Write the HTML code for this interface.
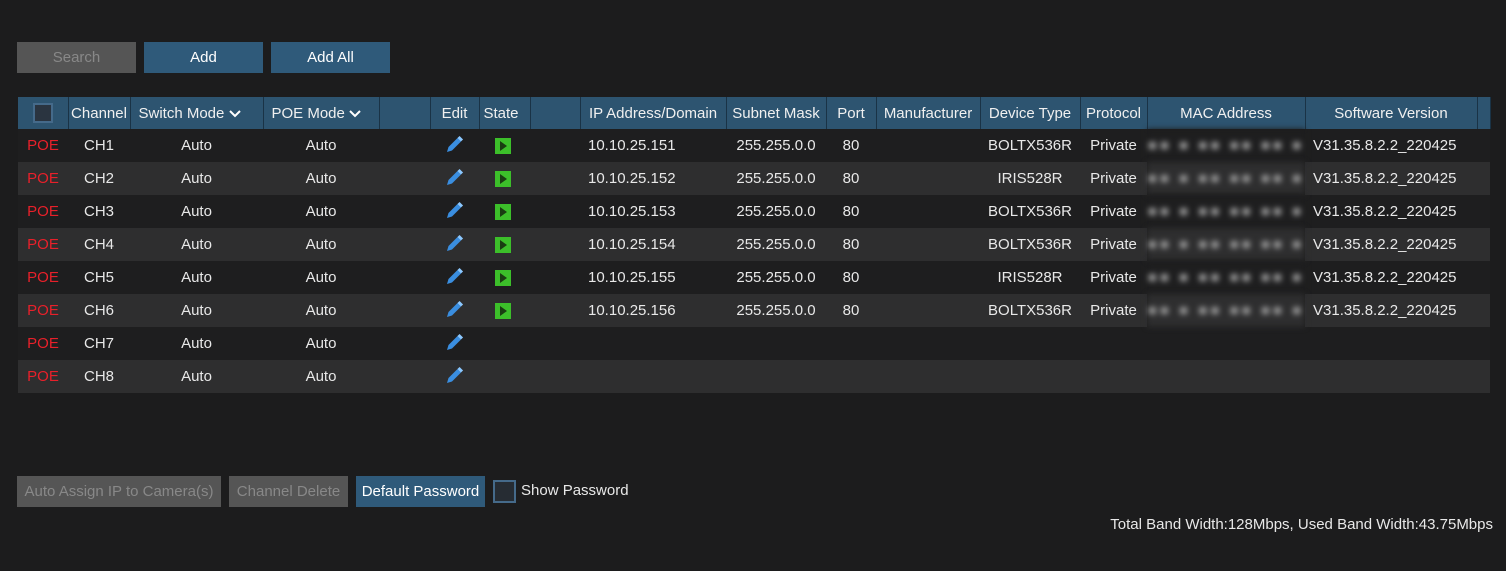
<!DOCTYPE html>
<html><head><meta charset="utf-8"><style>
*{margin:0;padding:0;box-sizing:border-box}
body{width:1506px;height:571px;background:#1c1c1d;font-family:"Liberation Sans",sans-serif;font-size:15px;color:#e8e8e8;position:relative;overflow:hidden}
.btn{position:absolute;height:31px;line-height:31px;text-align:center;font-size:15px;white-space:nowrap;overflow:hidden}
.blue{background:#2f5a7a;color:#fff}
.grey{background:#555;color:#888}
table{position:absolute;left:18px;top:97px;border-collapse:collapse;table-layout:fixed;width:1472px}
td,th{height:33px;padding:0;text-align:center;white-space:nowrap;font-weight:normal;overflow:hidden}
th{background:#2d5470;border-right:1px solid #1a3346;height:32px;color:#f0f0f0;font-size:15px}
tr.a td{background:#1e1e1f}
tr.b td{background:#2e2e2f}
.poe{color:#e8202a}
.l{text-align:left;padding-left:8px}
.mac{filter:blur(3px);color:#999;letter-spacing:3px}
.cb{display:inline-block;width:20px;height:20px;background:#2a3440;border:2px solid #456a8a;vertical-align:middle}
.play{display:inline-block;width:16px;height:16px;background:#3cbf2a;position:relative;vertical-align:middle}
.play:after{content:"";position:absolute;left:5px;top:3px;border-left:7px solid #1a3d12;border-top:5px solid transparent;border-bottom:5px solid transparent}
</style></head><body>
<div class="btn grey" style="left:17px;top:42px;width:119px">Search</div>
<div class="btn blue" style="left:144px;top:42px;width:119px">Add</div>
<div class="btn blue" style="left:271px;top:42px;width:119px">Add All</div>
<table>
<colgroup><col style="width:50px"><col style="width:62px"><col style="width:133px"><col style="width:116px"><col style="width:51px"><col style="width:49px"><col style="width:51px"><col style="width:50px"><col style="width:146px"><col style="width:100px"><col style="width:50px"><col style="width:104px"><col style="width:100px"><col style="width:67px"><col style="width:158px"><col style="width:172px"><col style="width:13px"></colgroup>
<tr><th><span class="cb"></span></th><th>Channel</th><th style="text-align:left;padding-left:8px">Switch Mode <svg width="12" height="8" viewBox="0 0 12 8"><path d="M1 1l5 5 5-5" stroke="#fff" stroke-width="2" fill="none"/></svg></th><th style="text-align:left;padding-left:8px">POE Mode <svg width="12" height="8" viewBox="0 0 12 8"><path d="M1 1l5 5 5-5" stroke="#fff" stroke-width="2" fill="none"/></svg></th><th></th><th>Edit</th><th style="text-align:left;padding-left:4px">State</th><th></th><th>IP Address/Domain</th><th>Subnet Mask</th><th>Port</th><th>Manufacturer</th><th>Device Type</th><th>Protocol</th><th>MAC Address</th><th>Software Version</th><th></th></tr>
<tr class="a"><td class="poe">POE</td><td>CH1</td><td>Auto</td><td>Auto</td><td></td><td><svg width="20" height="20" viewBox="0 0 20 20"><path d="M2 18l1.5-5 9-9 3.5 3.5-9 9z" fill="#3a8ee0"/><path d="M13.5 3l3.5 3.5" stroke="#8cc8ff" stroke-width="3"/></svg></td><td style="text-align:left;padding-left:16px"><span class="play"></span></td><td></td><td class="l">10.10.25.151</td><td>255.255.0.0</td><td>80</td><td></td><td>BOLTX536R</td><td>Private</td><td class="mac">■■ ■ ■■ ■■ ■■ ■</td><td class="l">V31.35.8.2.2_220425</td><td></td></tr>
<tr class="b"><td class="poe">POE</td><td>CH2</td><td>Auto</td><td>Auto</td><td></td><td><svg width="20" height="20" viewBox="0 0 20 20"><path d="M2 18l1.5-5 9-9 3.5 3.5-9 9z" fill="#3a8ee0"/><path d="M13.5 3l3.5 3.5" stroke="#8cc8ff" stroke-width="3"/></svg></td><td style="text-align:left;padding-left:16px"><span class="play"></span></td><td></td><td class="l">10.10.25.152</td><td>255.255.0.0</td><td>80</td><td></td><td>IRIS528R</td><td>Private</td><td class="mac">■■ ■ ■■ ■■ ■■ ■</td><td class="l">V31.35.8.2.2_220425</td><td></td></tr>
<tr class="a"><td class="poe">POE</td><td>CH3</td><td>Auto</td><td>Auto</td><td></td><td><svg width="20" height="20" viewBox="0 0 20 20"><path d="M2 18l1.5-5 9-9 3.5 3.5-9 9z" fill="#3a8ee0"/><path d="M13.5 3l3.5 3.5" stroke="#8cc8ff" stroke-width="3"/></svg></td><td style="text-align:left;padding-left:16px"><span class="play"></span></td><td></td><td class="l">10.10.25.153</td><td>255.255.0.0</td><td>80</td><td></td><td>BOLTX536R</td><td>Private</td><td class="mac">■■ ■ ■■ ■■ ■■ ■</td><td class="l">V31.35.8.2.2_220425</td><td></td></tr>
<tr class="b"><td class="poe">POE</td><td>CH4</td><td>Auto</td><td>Auto</td><td></td><td><svg width="20" height="20" viewBox="0 0 20 20"><path d="M2 18l1.5-5 9-9 3.5 3.5-9 9z" fill="#3a8ee0"/><path d="M13.5 3l3.5 3.5" stroke="#8cc8ff" stroke-width="3"/></svg></td><td style="text-align:left;padding-left:16px"><span class="play"></span></td><td></td><td class="l">10.10.25.154</td><td>255.255.0.0</td><td>80</td><td></td><td>BOLTX536R</td><td>Private</td><td class="mac">■■ ■ ■■ ■■ ■■ ■</td><td class="l">V31.35.8.2.2_220425</td><td></td></tr>
<tr class="a"><td class="poe">POE</td><td>CH5</td><td>Auto</td><td>Auto</td><td></td><td><svg width="20" height="20" viewBox="0 0 20 20"><path d="M2 18l1.5-5 9-9 3.5 3.5-9 9z" fill="#3a8ee0"/><path d="M13.5 3l3.5 3.5" stroke="#8cc8ff" stroke-width="3"/></svg></td><td style="text-align:left;padding-left:16px"><span class="play"></span></td><td></td><td class="l">10.10.25.155</td><td>255.255.0.0</td><td>80</td><td></td><td>IRIS528R</td><td>Private</td><td class="mac">■■ ■ ■■ ■■ ■■ ■</td><td class="l">V31.35.8.2.2_220425</td><td></td></tr>
<tr class="b"><td class="poe">POE</td><td>CH6</td><td>Auto</td><td>Auto</td><td></td><td><svg width="20" height="20" viewBox="0 0 20 20"><path d="M2 18l1.5-5 9-9 3.5 3.5-9 9z" fill="#3a8ee0"/><path d="M13.5 3l3.5 3.5" stroke="#8cc8ff" stroke-width="3"/></svg></td><td style="text-align:left;padding-left:16px"><span class="play"></span></td><td></td><td class="l">10.10.25.156</td><td>255.255.0.0</td><td>80</td><td></td><td>BOLTX536R</td><td>Private</td><td class="mac">■■ ■ ■■ ■■ ■■ ■</td><td class="l">V31.35.8.2.2_220425</td><td></td></tr>
<tr class="a"><td class="poe">POE</td><td>CH7</td><td>Auto</td><td>Auto</td><td></td><td><svg width="20" height="20" viewBox="0 0 20 20"><path d="M2 18l1.5-5 9-9 3.5 3.5-9 9z" fill="#3a8ee0"/><path d="M13.5 3l3.5 3.5" stroke="#8cc8ff" stroke-width="3"/></svg></td><td></td><td></td><td></td><td></td><td></td><td></td><td></td><td></td><td></td><td></td><td></td></tr>
<tr class="b"><td class="poe">POE</td><td>CH8</td><td>Auto</td><td>Auto</td><td></td><td><svg width="20" height="20" viewBox="0 0 20 20"><path d="M2 18l1.5-5 9-9 3.5 3.5-9 9z" fill="#3a8ee0"/><path d="M13.5 3l3.5 3.5" stroke="#8cc8ff" stroke-width="3"/></svg></td><td></td><td></td><td></td><td></td><td></td><td></td><td></td><td></td><td></td><td></td><td></td></tr>
</table>
<div class="btn grey" style="left:17px;top:476px;width:204px">Auto Assign IP to Camera(s)</div>
<div class="btn grey" style="left:229px;top:476px;width:119px">Channel Delete</div>
<div class="btn blue" style="left:356px;top:476px;width:129px">Default Password</div>
<span class="cb" style="position:absolute;left:493px;top:480px;width:23px;height:23px;background:#262c33"></span>
<div style="position:absolute;left:521px;top:482px">Show Password</div>
<div style="position:absolute;right:13px;top:516px">Total Band Width:128Mbps, Used Band Width:43.75Mbps</div>
</body></html>
